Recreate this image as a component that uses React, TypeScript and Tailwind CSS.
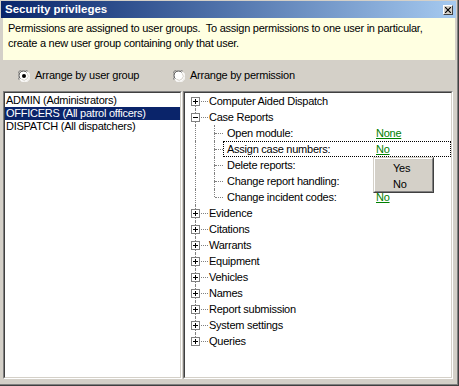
import React from 'react';

const roots = [
  'Computer Aided Dispatch',
  'Case Reports',
  'Evidence',
  'Citations',
  'Warrants',
  'Equipment',
  'Vehicles',
  'Names',
  'Report submission',
  'System settings',
  'Queries',
];

const caseItems = [
  { label: 'Open module:', value: 'None' },
  { label: 'Assign case numbers:', value: 'No', focused: true },
  { label: 'Delete reports:', value: 'No' },
  { label: 'Change report handling:', value: 'No' },
  { label: 'Change incident codes:', value: 'No' },
];

const groups = [
  'ADMIN (Administrators)',
  'OFFICERS (All patrol officers)',
  'DISPATCH (All dispatchers)',
];

function Expander({ open }: { open?: boolean }) {
  return (
    <svg width="9" height="9" viewBox="0 0 9 9" className="block shrink-0">
      <rect x="0.5" y="0.5" width="8" height="8" fill="#fff" stroke="#808080" />
      <path d="M2 4.5h5" stroke="#000" />
      {!open && <path d="M4.5 2v5" stroke="#000" />}
    </svg>
  );
}

function Radio({ checked }: { checked?: boolean }) {
  return (
    <svg width="12" height="12" viewBox="0 0 12 12" className="block shrink-0">
      <circle cx="6" cy="6" r="5.5" fill="#fff" />
      <path d="M1.2 9.8A5.5 5.5 0 0 1 9.8 1.2" fill="none" stroke="#808080" />
      <path d="M2.3 8.7A4.2 4.2 0 0 1 8.7 2.3" fill="none" stroke="#404040" />
      <path d="M10.4 2.6A5.5 5.5 0 0 1 2.6 10.4" fill="none" stroke="#fff" />
      <path d="M9.3 3.4A4.2 4.2 0 0 1 3.4 9.3" fill="none" stroke="#d4d0c8" />
      {checked && <circle cx="6" cy="6" r="2" fill="#000" />}
    </svg>
  );
}

function Sunken({ className, children }: { className?: string; children: React.ReactNode }) {
  return (
    <div className={`border border-t-[#808080] border-l-[#808080] border-b-white border-r-white ${className ?? ''}`}>
      <div className="h-full border border-t-[#404040] border-l-[#404040] border-b-[#d4d0c8] border-r-[#d4d0c8] bg-white">
        {children}
      </div>
    </div>
  );
}

function RootRow({ label, first, last, open }: { label: string; first?: boolean; last?: boolean; open?: boolean }) {
  return (
    <div className="flex h-[16px] items-stretch">
      <div className="w-[6px]" />
      <div className="w-[9px] flex flex-col">
        <div className={`ml-[4px] h-[4px] ${first ? '' : 'border-l border-dotted border-[#808080]'}`} />
        <Expander open={open} />
        <div className={`ml-[4px] flex-1 ${last ? '' : 'border-l border-dotted border-[#808080]'}`} />
      </div>
      <div className="self-center ml-[1px] w-[7px] border-t border-dotted border-[#808080]" />
      <div className="ml-[1px] flex items-center">{label}</div>
    </div>
  );
}

function ChildRow({ label, value, focused, last }: { label: string; value: string; focused?: boolean; last?: boolean }) {
  return (
    <div className="flex h-[16px] items-stretch">
      <div className="w-[6px]" />
      <div className="w-[9px]">
        <div className="ml-[4px] h-full border-l border-dotted border-[#808080]" />
      </div>
      <div className="w-[14px]" />
      <div className="w-px flex flex-col">
        <div className="h-[8px] border-l border-dotted border-[#808080]" />
        <div className={`flex-1 ${last ? '' : 'border-l border-dotted border-[#808080]'}`} />
      </div>
      <div className="self-center w-[8px] border-t border-dotted border-[#808080]" />
      <div
        className={`flex-1 flex items-center pl-[3px] border border-dotted ${focused ? 'border-black' : 'border-transparent'}`}
      >
        <span className="w-[149px] shrink-0">{label}</span>
        <span className="text-[#008000] underline">{value}</span>
      </div>
    </div>
  );
}

export default function App() {
  return (
    <div className="w-[459px] h-[386px] bg-[#d4d0c8] border-r border-b border-[#404040] font-['Liberation_Sans',Arial,sans-serif] text-[11px] tracking-[-0.25px] text-black select-none">
      <div className="h-full flex flex-col pl-[1px] pt-[1px] pr-[1px] border-r border-b border-[#808080]">
        {/* title bar */}
        <div className="h-[17px] flex items-center justify-between pl-[4px] pr-[3px] bg-gradient-to-r from-[#0a246a] to-[#a6caf0]">
          <span className="text-white font-bold text-[11.5px] tracking-normal">Security privileges</span>
          <div className="w-[10px] h-[10px] bg-[#d4d0c8] border border-t-white border-l-white border-b-[#404040] border-r-[#404040] flex items-center justify-center">
            <svg width="6" height="6" viewBox="0 0 6 6" className="block">
              <path d="M0 0L6 6M6 0L0 6" stroke="#000" strokeWidth="1.2" />
            </svg>
          </div>
        </div>

        {/* info */}
        <div className="ml-[2px] mr-px h-[42px] bg-[#ffffe1] pl-[5px] pt-[3px] leading-[15px]">
          <p>Permissions are assigned to user groups.&nbsp; To assign permissions to one user in particular,</p>
          <p>create a new user group containing only that user.</p>
        </div>

        {/* arrange options */}
        <div className="h-[31px] flex items-center pl-[17px]">
          <label className="w-[155px] flex items-center gap-[5px]">
            <Radio checked />
            <span>Arrange by user group</span>
          </label>
          <label className="flex items-center gap-[5px]">
            <Radio />
            <span>Arrange by permission</span>
          </label>
        </div>

        {/* panels */}
        <div className="ml-[2px] mr-[3px] h-[288px] flex gap-px">
          <Sunken className="w-[179px]">
            <div className="pt-px">
              {groups.map((g, i) => (
                <div
                  key={g}
                  className={`h-[13px] leading-[13px] pl-[1px] ${i === 1 ? 'bg-[#0a246a] text-white' : ''}`}
                >
                  {g}
                </div>
              ))}
            </div>
          </Sunken>

          <Sunken className="flex-1">
            <div className="relative h-full">
              <RootRow label={roots[0]} first />
              <RootRow label={roots[1]} open />
              {caseItems.map((c, i) => (
                <ChildRow
                  key={c.label}
                  label={c.label}
                  value={c.value}
                  focused={c.focused}
                  last={i === caseItems.length - 1}
                />
              ))}
              {roots.slice(2).map((r, i, arr) => (
                <RootRow key={r} label={r} last={i === arr.length - 1} />
              ))}

              {/* value dropdown */}
              <div className="absolute left-[188px] top-[64px] w-[61px] h-[36px] border border-t-[#d4d0c8] border-l-[#d4d0c8] border-b-[#404040] border-r-[#404040]">
                <div className="h-full bg-[#d4d0c8] border border-t-white border-l-white border-b-[#808080] border-r-[#808080] pl-[18px] pt-px">
                  <div className="h-[16px] leading-[16px]">Yes</div>
                  <div className="h-[16px] leading-[16px]">No</div>
                </div>
              </div>
            </div>
          </Sunken>
        </div>
      </div>
    </div>
  );
}
